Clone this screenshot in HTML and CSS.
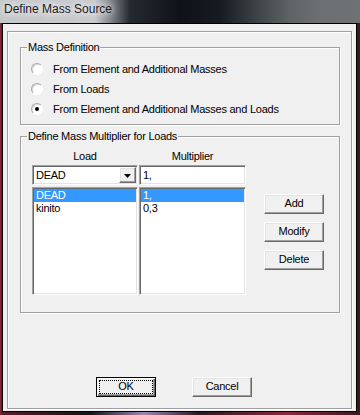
FILE: index.html
```html
<!DOCTYPE html>
<html lang="en">
<head>
  <meta charset="UTF-8">
  <meta name="viewport" content="width=device-width, initial-scale=1.0">
  <title>Define Mass Source</title>
  <link rel="stylesheet" href="styles.css">
</head>
<body>
  <div class="window">
    <div class="titlebar"><span class="title">Define Mass Source</span></div>
    <div class="client">
      <div class="frame">
        <fieldset class="group group-mass">
          <legend>Mass Definition</legend>
          <div class="radios">
            <label class="radio-row"><span class="radio"></span>From Element and Additional Masses</label>
            <label class="radio-row"><span class="radio"></span>From Loads</label>
            <label class="radio-row"><span class="radio checked"></span>From Element and Additional Masses and Loads</label>
          </div>
        </fieldset>

        <fieldset class="group group-mult">
          <legend>Define Mass Multiplier for Loads</legend>
          <div class="mult-grid">
            <div class="col-head">Load</div>
            <div class="col-head">Multiplier</div>
            <div></div>

            <div class="combo sunken">
              <span class="combo-text">DEAD</span>
              <span class="combo-btn raised">
                <svg width="7" height="4" viewBox="0 0 7 4"><polygon points="0,0 7,0 3.5,4" fill="#000"/></svg>
              </span>
            </div>
            <div class="textbox sunken">1,</div>
            <div></div>

            <div class="listbox sunken">
              <div class="item selected">DEAD</div>
              <div class="item">kinito</div>
            </div>
            <div class="listbox sunken">
              <div class="item selected">1,</div>
              <div class="item">0,3</div>
            </div>
            <div class="side-buttons">
              <button class="btn raised">Add</button>
              <button class="btn raised">Modify</button>
              <button class="btn raised">Delete</button>
            </div>
          </div>
        </fieldset>

        <div class="footer">
          <button class="btn raised default">OK</button>
          <button class="btn raised">Cancel</button>
        </div>
      </div>
    </div>
  </div>
</body>
</html>
```

FILE: styles.css
```css
* { box-sizing: border-box; }
body {
  margin: 0;
  width: 360px;
  height: 415px;
  overflow: hidden;
  font-family: "Liberation Sans", Arial, sans-serif;
  font-size: 11px;
  letter-spacing: -0.25px;
  color: #000;
  background: linear-gradient(90deg, #8a2a3c 0, #5a1c2c 2px, #141418 25%, #9a88b8 40%, #2a1a24 55%, #8c2a3a 80%, #3a1a20 100%);
}
.window {
  height: 415px;
  display: flex;
  flex-direction: column;
}
.titlebar {
  height: 23px;
  padding-left: 4px;
  font-size: 12px;
  line-height: 19px;
  letter-spacing: 0;
  color: #1a1a1a;
  text-shadow: 0 0 6px #fff, 0 0 10px rgba(255,255,255,0.9);
  background: linear-gradient(90deg, #c4c8cb 0, #c6cacd 95px, #7a7f84 112px, #252a30 130px, #0f1319 180px, #161b21 220px, #3f4448 258px, #5e6366 290px, #6c7073 320px, #6e7275 100%);
}
.client {
  height: 389px;
  margin: 0 3px 0 2px;
  border: 1px solid #000;
  background: #f0f0f0;
  padding: 7px 4px 2px 4px;
}
.frame {
  height: 378px;
  border: 1px solid #a0a0a0;
  box-shadow: inset 1px 1px #fff, 1px 1px #fff;
  display: flex;
  flex-direction: column;
}

/* group boxes */
.group {
  width: 320px;
  min-inline-size: 0;
  margin: 0 0 0 12px;
  padding: 0;
  border: 1px solid #a0a0a0;
  box-shadow: inset 1px 1px #fff, 1px 1px #fff;
}
.group-mass { margin-top: 9px; }
.group-mult { margin-top: 5px; }
.group legend {
  margin-left: 6px;
  padding: 0 1px;
  line-height: 12px;
  background: #f0f0f0;
}

.radios { padding: 6px 0 5px 10px; }
.radio-row {
  display: flex;
  align-items: center;
  height: 20px;
  line-height: 20px;
}
.radio {
  position: relative;
  width: 12px;
  height: 12px;
  margin-right: 10px;
  border-radius: 50%;
  border: 1px solid;
  border-color: #a8a8a8 #fff #fff #a8a8a8;
  background: #fff;
  box-shadow: inset 1px 1px #d8d8d8;
}
.radio.checked::after {
  content: "";
  position: absolute;
  left: 3px;
  top: 3px;
  width: 4px;
  height: 4px;
  border-radius: 50%;
  background: #000;
}

/* load multipliers */
.mult-grid {
  display: grid;
  grid-template-columns: 106px 107px 77px;
  grid-template-rows: 13px 20px 108px;
  column-gap: 1px;
  row-gap: 2px;
  padding: 8px 0 17px 11px;
}
.col-head {
  text-align: center;
  line-height: 13px;
}
.sunken {
  border: 1px solid;
  border-color: #a0a0a0 #fff #fff #a0a0a0;
  box-shadow: inset 1px 1px #696969, inset -1px -1px #e3e3e3;
  background: #fff;
  padding: 1px;
}
.raised {
  border: 1px solid;
  border-color: #fff #696969 #696969 #fff;
  box-shadow: inset -1px -1px #a0a0a0, inset 1px 1px #e3e3e3;
  background: #f0f0f0;
}
.combo { display: flex; }
.combo-text {
  flex: 1;
  padding-left: 2px;
  line-height: 16px;
}
.combo-btn {
  width: 17px;
  height: 16px;
  display: flex;
  align-items: center;
  justify-content: center;
}
.combo-btn svg { display: block; margin-top: 1px; }
.textbox {
  padding-left: 3px;
  line-height: 16px;
}
.item {
  height: 13px;
  line-height: 13px;
  padding-left: 2px;
}
.item.selected {
  background: #3399ff;
  color: #fff;
}
.side-buttons {
  padding: 7px 0 0 17px;
  display: flex;
  flex-direction: column;
  gap: 8px;
}

.btn {
  width: 60px;
  height: 20px;
  padding: 0 0 2px;
  font: inherit;
  letter-spacing: inherit;
  line-height: 16px;
  color: #000;
}
.btn.default {
  border-color: #000;
  box-shadow: inset 1px 1px #fff, inset -1px -1px #696969, inset -2px -2px #a0a0a0;
  outline: 1px dotted #000;
  outline-offset: -4px;
}
.footer {
  margin-top: auto;
  padding: 0 0 11px 88px;
  display: flex;
  gap: 36px;
}
```
